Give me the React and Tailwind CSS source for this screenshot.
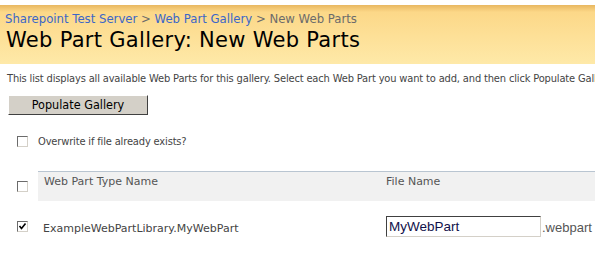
export default function App() {
  const tahoma = "font-['DejaVu_Sans_Condensed','DejaVu_Sans',sans-serif] tracking-[-0.15px]";
  const verdana = "font-['DejaVu_Sans',sans-serif]";
  const box = 'w-[11px] h-[11px] border border-t-[#6b6b6b] border-l-[#6b6b6b] border-r-[#d4d0c8] border-b-[#d4d0c8] bg-white';
  return (
    <div className="w-[595px] h-[257px] overflow-hidden bg-white relative">
      <div className="h-[5px] bg-white" />
      <div className="h-[59px] bg-gradient-to-b from-[#e8b760] via-[#fcd888] via-[12%] to-[#fee9a8] pl-[5px] pt-[8px]">
        <div className={`${verdana} text-[11.7px] leading-[13px] text-[#3b66c8] whitespace-nowrap`}>
          Sharepoint Test Server <span className="text-[#6b6b6b]">&gt;</span> Web Part Gallery{' '}
          <span className="text-[#6b6b6b]">&gt; New Web Parts</span>
        </div>
        <h1 className={`${verdana} text-[21px] tracking-[0.3px] leading-[24px] text-black ml-[1px] mt-[2px] whitespace-nowrap`}>
          Web Part Gallery: New Web Parts
        </h1>
      </div>
      <div className="text-[11px] text-[#444] px-[7px] pt-[8px] whitespace-nowrap">
        <p className={`${tahoma} leading-[13px]`}>
          This list displays all available Web Parts for this gallery. Select each Web Part you want to add, and then click Populate Gallery.
        </p>
        <button className="font-['DejaVu_Sans_Condensed','DejaVu_Sans',sans-serif] mt-[10px] ml-[1px] w-[140px] h-[20px] bg-[#d4d0c8] border border-t-white border-l-white border-r-[#404040] border-b-[#404040] text-[12.5px] text-black">
          Populate Gallery
        </button>
        <label className="flex items-center gap-[10px] mt-[20px] ml-[10px]">
          <span className={box} />
          <span className={`${tahoma} text-[11px] leading-[13px]`}>Overwrite if file already exists?</span>
        </label>
        <div className={`${verdana} flex mt-[23px] -mr-[7px]`}>
          <div className="w-[31px] shrink-0 flex items-center pl-[10px]">
            <span className={box} />
          </div>
          <div className="flex-1 h-[30px] bg-[#f1f1f1] border-t border-[#b9c5d1] flex text-[#555] pt-[2px]">
            <span className="w-[348px] shrink-0 pl-[6px]">Web Part Type Name</span>
            <span>File Name</span>
          </div>
        </div>
        <div className={`${verdana} flex items-center mt-[14px] -mr-[7px]`}>
          <div className="w-[31px] shrink-0 pl-[10px] flex">
            <span className={`${box} flex items-center justify-center`}>
              <svg viewBox="0 0 9 9" className="w-[9px] h-[9px]">
                <path d="M1.5 4 L3.5 6.5 L7.5 1.5" fill="none" stroke="#000" strokeWidth="1.6" />
              </svg>
            </span>
          </div>
          <span className="w-[348px] shrink-0 pl-[5px] pt-[5px] text-[#444]">ExampleWebPartLibrary.MyWebPart</span>
          <input
            defaultValue="MyWebPart"
            className="w-[155px] shrink-0 h-[21px] px-[2px] border border-t-[#404040] border-l-[#404040] border-r-[#d4d0c8] border-b-[#d4d0c8] font-['Liberation_Sans',sans-serif] text-[13.5px] text-[#10104a] outline-none"
          />
          <span className="shrink-0 font-['Liberation_Sans',sans-serif] text-[13px] text-[#555] ml-[1px] mt-[3px]">.webpart</span>
        </div>
      </div>
    </div>
  );
}
